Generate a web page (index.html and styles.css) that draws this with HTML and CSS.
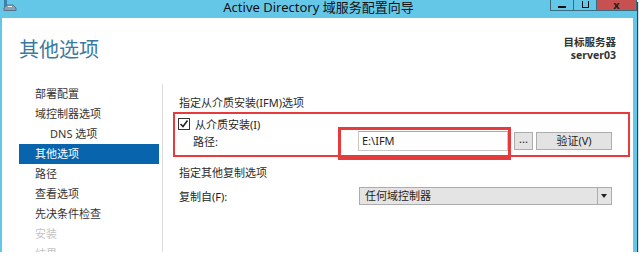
FILE: index.html
```html
<!DOCTYPE html>
<html lang="zh-CN">
<head>
    <meta charset="UTF-8">
    <title>Active Directory 域服务配置向导</title>
    <link rel="stylesheet" href="styles.css">
</head>
<body>
    <div class="window">
        <div class="titlebar">
            <div class="app-icon">
                <svg width="14" height="11" viewBox="0 0 14 11">
                    <rect x="1" y="0" width="3" height="9" fill="#3f7fb0"/>
                    <path d="M4 5 L10 5 L13 8 L13 10.5 L1 10.5 L1 8 Z" fill="#8aa3b3" stroke="#5b7384" stroke-width="1"/>
                    <rect x="5" y="6" width="4" height="1" fill="#e8eef2"/>
                </svg>
            </div>
            <div class="title">Active Directory 域服务配置向导</div>
            <div class="controls">
                <span class="ctl min"><i></i></span>
                <span class="ctl max"><i></i></span>
                <span class="ctl close">x</span>
            </div>
        </div>

        <div class="client">
            <div class="head">
                <h1>其他选项</h1>
                <div class="target">
                    <div>目标服务器</div>
                    <div class="server">server03</div>
                </div>
            </div>

            <div class="main">
                <ul class="nav">
                    <li>部署配置</li>
                    <li>域控制器选项</li>
                    <li class="sub">DNS 选项</li>
                    <li class="active">其他选项</li>
                    <li>路径</li>
                    <li>查看选项</li>
                    <li>先决条件检查</li>
                    <li class="off">安装</li>
                    <li class="off">结果</li>
                </ul>

                <div class="panel">
                    <div class="section-title">指定从介质安装(IFM)选项</div>
                    <div class="ifm-box">
                        <div class="check-row">
                            <span class="checkbox">
                                <svg width="10" height="10" viewBox="0 0 10 10">
                                    <path d="M1.5 5 L4 7.5 L8.5 1.5" fill="none" stroke="#222" stroke-width="1.6"/>
                                </svg>
                            </span>
                            <span class="check-label">从介质安装(I)</span>
                        </div>
                        <div class="path-row">
                            <span class="path-label">路径:</span>
                            <div class="input-wrap">
                                <div class="text-input">E:\IFM</div>
                                <span class="mark"></span>
                            </div>
                            <span class="btn dots">...</span>
                            <span class="btn verify">验证(V)</span>
                        </div>
                    </div>

                    <div class="section-title second">指定其他复制选项</div>
                    <div class="copy-row">
                        <span class="copy-label">复制自(F):</span>
                        <div class="combo">
                            <span class="combo-text">任何域控制器</span>
                            <span class="combo-arrow"></span>
                        </div>
                    </div>
                </div>
            </div>
        </div>
    </div>
</body>
</html>
```

FILE: styles.css
```css
* {
    margin: 0;
    padding: 0;
    box-sizing: border-box;
}

body {
    background: #fff;
    font-family: "Noto Sans", "Noto Sans CJK SC", sans-serif;
    font-size: 11px;
    color: #1e1e1e;
}

.window {
    width: 637px;
    height: 252px;
    background: #65c7e8;
    box-shadow: 1px 2px 1px rgba(0, 0, 0, 0.75);
    overflow: hidden;
}

.titlebar {
    height: 18px;
    display: grid;
    grid-template-columns: 1fr auto 1fr;
}

.app-icon {
    padding-left: 3px;
    line-height: 0;
}

.title {
    font-size: 13px;
    line-height: 14px;
    color: #111;
}

.controls {
    justify-self: end;
    display: flex;
    height: 11px;
}

.ctl {
    display: flex;
    justify-content: center;
    align-items: flex-end;
    border: 1px solid #3a6c80;
    border-top: none;
    margin-left: -1px;
}

.min, .max {
    width: 24px;
}

.min i {
    width: 8px;
    height: 2px;
    background: #111;
    margin-bottom: 2px;
}

.max i {
    width: 7px;
    height: 7px;
    border: 1px solid #111;
    border-top: none;
    margin-bottom: 2px;
}

.close {
    width: 41px;
    background: #c75050;
    color: #222;
    font-weight: bold;
    font-size: 11px;
    line-height: 9px;
    align-items: flex-start;
}

.client {
    margin-left: 2px;
    width: 631px;
    height: 234px;
    background: #fff;
    overflow: hidden;
}

.head {
    height: 66px;
    display: flex;
    justify-content: space-between;
}

.head h1 {
    font-weight: normal;
    font-size: 20px;
    line-height: 24px;
    color: #3b7aa0;
    padding: 20px 0 0 17px;
}

.target {
    padding: 18px 17px 0 0;
    text-align: right;
    font-size: 10.5px;
    line-height: 13px;
    font-weight: bold;
    color: #333;
}

.main {
    display: flex;
    height: 168px;
}

.nav {
    list-style: none;
    width: 161px;
    border-right: 1px solid #dcdcdc;
}

.nav li {
    width: 140px;
    height: 20px;
    line-height: 20px;
    margin-left: 17px;
    padding-left: 16px;
    color: #333;
}

.nav li.sub {
    padding-left: 31px;
}

.nav li.active {
    background: #0864ad;
    color: #fff;
}

.nav li.off {
    color: #c4c4c4;
}

.panel {
    flex: 1;
    padding: 10px 3px 0 10px;
}

.section-title {
    line-height: 18px;
    margin-left: 6px;
    color: #2a2a2a;
}

.section-title.second {
    margin-top: 7px;
}

.ifm-box {
    border: 2px solid #e63b3d;
    padding: 2px 0 4px 3px;
}

.check-row {
    height: 15px;
    display: flex;
    align-items: center;
}

.checkbox {
    width: 12px;
    height: 12px;
    border: 1px solid #333;
    background: #fff;
    display: flex;
    align-items: center;
    justify-content: center;
    margin-top: 1px;
}

.check-label {
    margin-left: 5px;
}

.path-row {
    height: 20px;
    display: flex;
    align-items: center;
}

.path-label {
    width: 180px;
    padding-left: 15px;
}

.input-wrap {
    position: relative;
}

.text-input {
    width: 150px;
    height: 20px;
    border: 1px solid #c8c8c8;
    border-top-color: #a9a9a9;
    line-height: 18px;
    padding-left: 3px;
    background: #fff;
}

.mark {
    position: absolute;
    left: -20px;
    right: -3px;
    top: -4px;
    bottom: -9px;
    border: 3px solid #e63b3d;
}

.btn {
    height: 18px;
    line-height: 16px;
    border: 1px solid #adadad;
    background: #e3e3e3;
    text-align: center;
    color: #222;
}

.dots {
    width: 19px;
    margin-left: 6px;
    line-height: 12px;
}

.verify {
    width: 76px;
    margin-left: 3px;
}

.copy-row {
    margin-top: 5px;
    height: 18px;
    display: flex;
    align-items: center;
}

.copy-label {
    width: 186px;
    padding-left: 6px;
}

.combo {
    width: 253px;
    height: 18px;
    display: flex;
    border: 1px solid #acacac;
    background: #e4e4e4;
}

.combo-text {
    flex: 1;
    line-height: 16px;
    padding-left: 5px;
}

.combo-arrow {
    width: 14px;
    border-left: 1px solid #acacac;
    position: relative;
}

.combo-arrow::after {
    content: "";
    position: absolute;
    left: 3px;
    top: 6px;
    border-left: 3px solid transparent;
    border-right: 3px solid transparent;
    border-top: 4px solid #222;
}
```
